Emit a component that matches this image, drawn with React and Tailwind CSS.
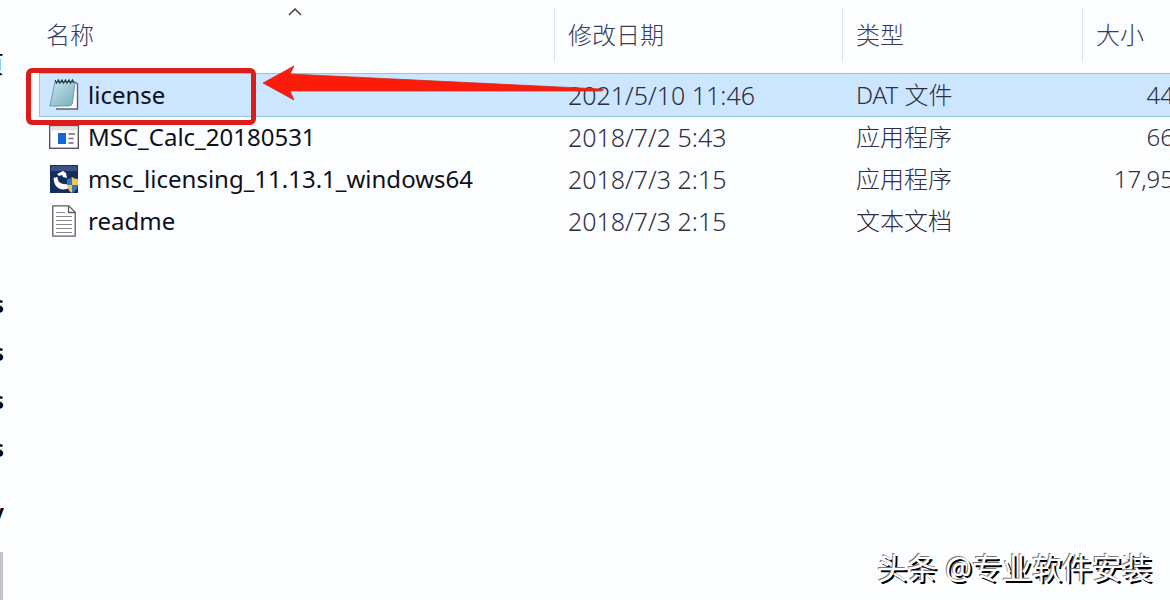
import React from 'react';

const NotepadIcon = () => (
  <svg viewBox="0 0 30 34" className="h-[34px] w-[30px]" aria-hidden="true">
    <defs>
      <linearGradient id="page" x1="0" y1="0" x2="1" y2="1">
        <stop offset="0" stopColor="#c9e6ea" />
        <stop offset="1" stopColor="#74adbf" />
      </linearGradient>
    </defs>
    <path d="M7 31h21.500V6L26 4" fill="#fff" stroke="#5b6468" strokeWidth="1.400" />
    <path d="M6 4h20l-2.500 21q-.5 3-4 3H.8z" fill="url(#page)" stroke="#5b8d9a" strokeWidth=".8" />
    <path d="M6 2l1.500 3L9.500 2 11 5l2-3 1.500 3 2-3L18 5l2-3 1.500 3 2-3L25 5" fill="none" stroke="#26383e" strokeWidth="1.200" />
  </svg>
);

const ProgramIcon = () => (
  <svg viewBox="0 0 30 30" className="h-[30px] w-[30px]" aria-hidden="true">
    <rect x=".7" y="3.700" width="28.600" height="22.600" fill="#fff" stroke="#555563" strokeWidth="1.400" />
    <rect x="1.400" y="4.400" width="27.200" height="4" fill="#e0e2e8" />
    <rect x="9" y="11" width="8" height="11" fill="#1268d6" />
    <path d="M19.500 12h6.500M19.500 16.500h5M19.500 21h5" stroke="#68687d" strokeWidth="1.400" />
  </svg>
);

const InstallerIcon = () => (
  <svg viewBox="0 0 28 28" className="h-7 w-7" aria-hidden="true">
    <rect width="28" height="28" fill="#152c5e" />
    <rect x="1" y="1" width="26" height="5" fill="#3a5186" />
    <path d="M7 9l6-3 3 2 1 5-4-1-1-2-3 1z" fill="#fff" />
    <path d="M3.500 13l4-1q0 5 4 6.500 3 1 6 .5l1.500 4q-5 2.500-10 .5-5-2.500-5.500-10.500z" fill="#fff" />
    <path d="M22 12q-2 2-5 2v6h5z" fill="#3576b4" />
    <path d="M22 12q2 2 6 2v6h-6z" fill="#efc45b" />
    <path d="M17 20h5v8q-4-2-5-8z" fill="#efc45b" />
    <path d="M22 20h6q-1 6-6 8z" fill="#3576b4" />
  </svg>
);

const TextIcon = () => (
  <svg viewBox="0 0 24 32" className="h-8 w-6" aria-hidden="true">
    <path d="M.8.8h16l6.400 6.400v24H.8z" fill="#fff" stroke="#5c5c64" strokeWidth="1.300" />
    <path d="M16.500 1v6.500H23" fill="none" stroke="#5c5c64" strokeWidth="1.300" />
    <path d="M4 7.500h9M4 11.500h16M4 15.500h16M4 19.500h16M4 23.500h16M4 27.500h16" stroke="#85858d" strokeWidth="1.200" />
  </svg>
);

const files = [
  { name: 'license', date: '2021/5/10 11:46', type: 'DAT 文件', size: '44', icon: NotepadIcon, selected: true },
  { name: 'MSC_Calc_20180531', date: '2018/7/2 5:43', type: '应用程序', size: '66', icon: ProgramIcon },
  { name: 'msc_licensing_11.13.1_windows64', date: '2018/7/3 2:15', type: '应用程序', size: '17,95', icon: InstallerIcon },
  { name: 'readme', date: '2018/7/3 2:15', type: '文本文档', size: '', icon: TextIcon },
];

const columns = ['修改日期', '类型', '大小'];

// Navigation pane, scrolled almost fully out of view
const Sidebar = () => (
  <aside className="flex w-10 shrink-0 flex-col text-2xl leading-[48px] text-black">
    <div className="flex h-[280px] w-1 justify-end overflow-hidden pt-10">页</div>
    {[1, 2, 3, 4].map((n) => (
      <div key={n} className="flex h-12 w-1 justify-end overflow-hidden font-semibold">s</div>
    ))}
    <div className="mt-4 flex h-12 w-1 justify-end overflow-hidden font-semibold">y</div>
    <div className="mt-4 w-[3px] grow bg-[#c5c5c8]" />
  </aside>
);

const FileTable = () => (
  <table className="w-full table-fixed border-collapse text-left text-2xl">
    <colgroup>
      <col className="w-[514px]" />
      <col className="w-72" />
      <col className="w-60" />
      <col />
    </colgroup>
    <thead>
      <tr className="h-[74px] align-top text-[#353b58]">
        <th className="p-0 pt-2 font-light">
          <div className="relative flex h-[54px] items-center pl-[6px]">
            名称
            <svg viewBox="0 0 14 8" className="absolute left-[248px] top-0 h-2 w-3.5" aria-hidden="true">
              <path d="M1 7l6-6 6 6" fill="none" stroke="#444" strokeWidth="1.500" />
            </svg>
          </div>
        </th>
        {columns.map((label) => (
          <th key={label} className="p-0 pt-2 font-light">
            <div className="flex h-[54px] items-center border-l border-[#dfe3ea] pl-[13px]">{label}</div>
          </th>
        ))}
      </tr>
    </thead>
    <tbody>
      {files.map(({ name, date, type, size, icon: Icon, selected }) => (
        <tr
          key={name}
          className={selected ? 'h-[42px] bg-[#cce6ff] outline outline-[#90c5e4]' : 'h-[42px]'}
        >
          <td className="p-0">
            <div className="flex h-[42px] items-center gap-2 pl-2 text-[#10101c]">
              <span className="flex w-8 justify-center"><Icon /></span>
              {name}
            </div>
          </td>
          <td className="p-0 pl-[14px] text-[25px] leading-8 font-light text-[#2e2e40]">{date}</td>
          <td className="p-0 pl-[14px] font-light text-[#2e2e40]">{type}</td>
          <td className="p-0 text-right font-light text-[#2e2e40]">
            <span className="-mr-1">{size}</span>
          </td>
        </tr>
      ))}
    </tbody>
  </table>
);

// Red box and arrow pointing at the selected file
const Annotation = () => (
  <div className="pointer-events-none absolute left-[26px] top-[68px] flex">
    <div className="h-[57px] w-[230px] rounded-md border-[5px] border-[#dc1c18]" />
    <svg viewBox="0 0 350 57" className="h-[57px] w-[350px] overflow-visible" aria-hidden="true">
      <path d="M7 15L38-2l-4 8L345 21q5 1 0 2L34 23l4 9z" fill="#fb1c0c" stroke="#c92f2a" strokeWidth=".8" />
    </svg>
  </div>
);

function App() {
  return (
    <div className="relative flex min-h-screen overflow-hidden bg-[#fcfdff] font-['Noto_Sans','Noto_Sans_CJK_SC',sans-serif]">
      <Sidebar />
      <main className="min-w-0 grow">
        <FileTable />
      </main>
      <Annotation />
      <p className="absolute bottom-[10px] right-[18px] text-[30px] leading-[45px] text-white [text-shadow:-1px_-1px_0_#777,2px_2px_0_#000]">
        头条 @专业软件安装
      </p>
    </div>
  );
}

export default App;
